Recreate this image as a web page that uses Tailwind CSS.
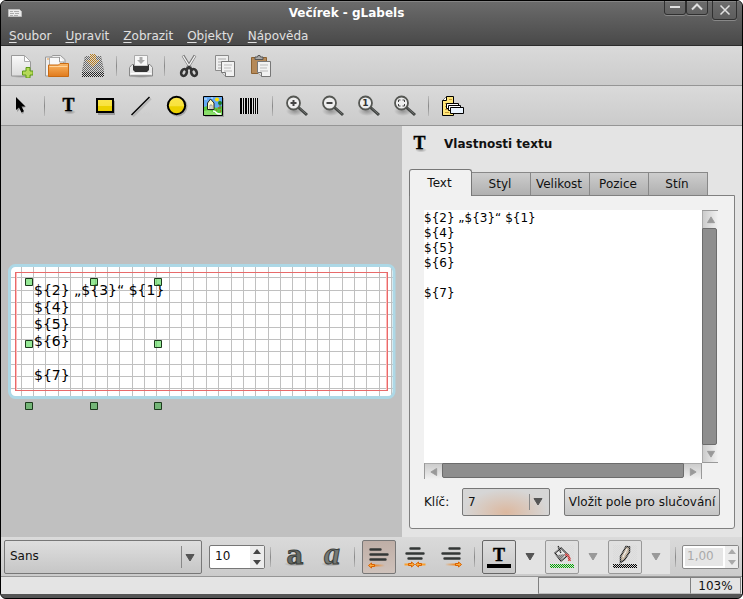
<!DOCTYPE html>
<html lang="cs">
<head>
<meta charset="utf-8">
<title>Večírek - gLabels</title>
<script src="https://cdn.jsdelivr.net/npm/@tailwindcss/browser@4"></script>
</head>
<body class="bg-white font-['DejaVu_Sans',sans-serif] text-[12px] leading-[15px] text-[#111]">
<svg class="absolute size-0" aria-hidden="true">
  <defs>
    <pattern id="dots" width="2" height="2" patternUnits="userSpaceOnUse"><path d="M0 0h1v1H0zM1 1h1v1H1z" fill="#d6d6d6"/></pattern>
    <linearGradient id="paper" x2="0" y2="1"><stop stop-color="#fafafa"/><stop offset="1" stop-color="#dcdcdc"/></linearGradient>
    <linearGradient id="orange" x2="0" y2="1"><stop stop-color="#fbb765"/><stop offset="1" stop-color="#e07a1c"/></linearGradient>
    <linearGradient id="yellow" x2="0" y2="1"><stop stop-color="#fbe64d"/><stop offset=".55" stop-color="#f8e23c"/><stop offset=".56" stop-color="#ecd100"/><stop offset="1" stop-color="#ecd100"/></linearGradient>
    <radialGradient id="shade"><stop stop-color="#000" stop-opacity=".3"/><stop offset="1" stop-color="#000" stop-opacity="0"/></radialGradient>
    <linearGradient id="fadeL"><stop stop-color="#f57900"/><stop offset="1" stop-color="#f57900" stop-opacity="0"/></linearGradient>
    <linearGradient id="fadeR"><stop stop-color="#f57900" stop-opacity="0"/><stop offset="1" stop-color="#f57900"/></linearGradient>
    <symbol id="lens" viewBox="0 0 24 24">
      <ellipse cx="10" cy="17" rx="9" ry="5" fill="url(#shade)"/>
      <path d="M13.500 13.500l8.500 7.500" stroke="#3f4240" stroke-width="3"/>
      <path d="M14.500 14l7 6.300" stroke="#6f716f" stroke-width="1"/>
      <circle cx="8.500" cy="9" r="6.500" fill="#eee" stroke="#555753" stroke-width="1.800"/>
    </symbol>
    <symbol id="down" viewBox="0 0 10 9"><path d="M1 1.500h8L5 8z" fill="currentColor" stroke="currentColor"/></symbol>
  </defs>
</svg>

<div class="flex min-h-screen flex-col overflow-hidden rounded-md border border-black bg-[#555]">
  <header class="h-[45px] border-b border-[#2c2c2c] bg-linear-to-b from-[#6c6c6c] to-[#494949] text-white">
    <div class="flex h-6 items-start border-t border-[#858585] pr-[5px]">
      <svg class="ml-1.5 mt-0.5 h-4 w-4" viewBox="0 0 16 16"><path d="M1.500 5.500h11l2 2v5h-13z" fill="#e9e9e9" stroke="#bbb"/><path d="M3 7.500h3m1 0h5M3 9.500h4m1 0h4M3 11.500h3m1 0h4" stroke="#aaa"/></svg>
      <h1 class="mt-1 flex-1 pl-1.5 text-center font-bold">Večírek - gLabels</h1>
      <button aria-label="Minimalizovat" class="-mt-1 flex h-[17px] w-[22px] items-center justify-center rounded-b-[3px] border border-[#303030] shadow-[0_1px_0_#888]"><svg class="mt-px size-3" viewBox="0 0 12 12"><path d="M1 6h10" stroke="#e0e0e0" stroke-width="2"/></svg></button>
      <button aria-label="Maximalizovat" class="-mt-1 flex h-[17px] w-[22px] items-center justify-center rounded-b-[3px] border border-[#303030] shadow-[0_1px_0_#888]"><svg class="mt-px size-3" viewBox="0 0 12 12"><path d="M1 8.500l5-5 5 5" fill="none" stroke="#e0e0e0" stroke-width="2"/></svg></button>
      <button aria-label="Zavřít" class="-mt-1 ml-1 flex h-[22px] w-[25px] items-center justify-center rounded-b-[3px] border border-[#303030] shadow-[0_1px_0_#888]"><svg class="mt-0.5 size-3" viewBox="0 0 12 12"><path d="M1.500 1.500l9 9m0-9l-9 9" stroke="#e0e0e0" stroke-width="1.500"/></svg></button>
    </div>
    <nav class="flex gap-3.5 pl-2 pt-1 text-[#e0e0e0]">
      <a href="#"><u class="underline-offset-2">S</u>oubor</a>
      <a href="#"><u class="underline-offset-2">U</u>pravit</a>
      <a href="#"><u class="underline-offset-2">Z</u>obrazit</a>
      <a href="#"><u class="underline-offset-2">O</u>bjekty</a>
      <a href="#"><u class="underline-offset-2">N</u>ápověda</a>
    </nav>
  </header>

  <div role="toolbar" aria-label="Soubor" class="flex h-10 items-center border-b border-[#959595] bg-linear-to-b from-[#dadada] to-[#cbcbcb] pl-0.5">
    <button aria-label="Nový" class="flex w-9 justify-center"><svg class="size-6" viewBox="0 0 24 24"><ellipse cx="12" cy="22" rx="11" ry="2" fill="url(#shade)"/><path d="M2.500 1.500h13l6 6v14.500h-19z" fill="url(#paper)" stroke="#999"/><path d="M15.500 1.500v6h6z" fill="#fff" stroke="#aaa"/><path d="M17 13.500h4v3.500h3v4h-3v3h-4v-3h-3.500v-4H17z" fill="#b5d957" stroke="#5d9a16"/></svg></button>
    <button aria-label="Otevřít" class="flex w-9 justify-center"><svg class="size-6" viewBox="0 0 24 24"><path d="M.5 22V3h6l1-1.500h8l4.500 4V22z" fill="#eee" stroke="#999"/><path d="M2 5h3" stroke="#ed9a40"/><path d="M4.500 20V3.500h10l4 4V20z" fill="#f8f8f8" stroke="#aaa"/><path d="M14.500 3v5h5" fill="#fff" stroke="#999"/><path d="M3.500 11h10l1.500-1.500h8.500v13h-20z" fill="url(#orange)" stroke="#c96a12"/><path d="M4.500 12.500h18" stroke="#ffd39a"/></svg></button>
    <button aria-label="Uložit" disabled class="flex w-9 justify-center"><svg class="size-6" viewBox="0 0 24 24"><path d="M4 2h16l3 15v6H1v-6z" fill="#666"/><path d="M1 18h22v5H1z" fill="#222"/><path d="M9 0h6v6h4l-7 7-7-7h4z" fill="#b87a18"/><path d="M4 2h16l3 15v6H1v-6zM8 0h8v2H8z" fill="url(#dots)"/></svg></button>
    <span class="ml-[5px] mr-1.5 h-5 w-px bg-linear-to-b from-[#bbb] via-[#888] to-[#bbb]"></span>
    <button aria-label="Tisk" class="flex w-9 justify-center"><svg class="size-6" viewBox="0 0 24 24"><ellipse cx="12" cy="22" rx="11" ry="2" fill="url(#shade)"/><path d="M3 10.500h18l2.500 3v8.500H.5v-8.500z" fill="#e8e8e8" stroke="#888"/><path d="M4 11h16v5l-2 2H6l-2-2z" fill="#333"/><path d="M5.500 12V1.500h13V12z" fill="#f7f7f7" stroke="#aaa"/><path d="M4 12h16v4H4z" fill="#333"/><path d="M10.500 3h3v3H16l-4 4-4-4h2.500z" fill="#aaa"/><path d="M1.500 19.500h21" stroke="#fff"/><path d="M1.500 21.500h21" stroke="#999"/></svg></button>
    <span class="ml-[5px] mr-1.5 h-5 w-px bg-linear-to-b from-[#bbb] via-[#888] to-[#bbb]"></span>
    <button aria-label="Vyjmout" class="flex w-9 justify-center"><svg class="size-6" viewBox="0 0 24 24"><path d="M6 1.500l8.500 14M18 1.500l-8.500 14" stroke="#777" stroke-width="3"/><path d="M6 2l8 13M18 2l-8 13" stroke="#f3f3f3" stroke-width="1.400"/><g fill="none" stroke="#333" stroke-width="2.600"><ellipse cx="7" cy="18.500" rx="2.700" ry="3.500" transform="rotate(25 7 18.500)"/><ellipse cx="17" cy="18.500" rx="2.700" ry="3.500" transform="rotate(-25 17 18.500)"/><path d="M9 16l3-3 3 3"/></g></svg></button>
    <button aria-label="Kopírovat" class="flex w-9 justify-center"><svg class="size-6" viewBox="0 0 24 24"><path d="M2.500 1.500h13v15h-13z" fill="#eee" stroke="#8a8a8a"/><path d="M5 5h8M5 8h9M5 11h5M5 14h3" stroke="#aaa"/><path d="M8.500 7.500h13v15h-9l-4-4z" fill="#f2f2f2" stroke="#777"/><path d="M11 11h8M11 14h7M11 17h8" stroke="#bbb"/><path d="M8.500 18.500h4v4" fill="#ddd" stroke="#777"/></svg></button>
    <button aria-label="Vložit" class="flex w-9 justify-center"><svg class="size-6" viewBox="0 0 24 24"><path d="M2.500 3.500h15v16h-15z" fill="#b58958" stroke="#8b6233"/><path d="M6 5.500V3h2.500l.5-1.500h2l.5 1.500H14v2.500z" fill="#aaa" stroke="#555"/><path d="M8.500 7.500h13v15h-9l-4-4z" fill="#f2f2f2" stroke="#777"/><path d="M11 11h8M11 14h7M11 17h8" stroke="#bbb"/><path d="M8.500 18.500h4v4" fill="#ddd" stroke="#777"/></svg></button>
  </div>

  <div role="toolbar" aria-label="Kreslení" class="flex h-10 items-center border-b border-[#959595] bg-linear-to-b from-[#dadada] to-[#cbcbcb] pl-0.5">
    <button aria-label="Výběr" class="flex w-9 justify-center"><svg class="size-6" viewBox="0 0 24 24"><path d="M8 6v12l3-3 2 5 2-1-2-5 4-1z" fill="#000" opacity=".25"/><path d="M7 3v13l3-2.500 2.500 5 2.500-1.200-2.500-4.800h4z" fill="#000"/></svg></button>
    <span class="ml-[5px] mr-1.5 h-5 w-px bg-linear-to-b from-[#bbb] via-[#888] to-[#bbb]"></span>
    <button aria-label="Text" class="flex w-9 justify-center"><svg class="size-6 overflow-visible font-['Liberation_Serif',serif] font-bold" viewBox="0 0 24 24"><ellipse cx="13" cy="18" rx="6" ry="2.500" fill="url(#shade)"/><text x="11.500" y="17" text-anchor="middle" font-size="18" stroke="#000" stroke-width=".4">T</text></svg></button>
    <button aria-label="Obdélník" class="flex w-9 justify-center"><svg class="size-6" viewBox="0 0 24 24"><path d="M5 7h17v14H5z" fill="#000" opacity=".25"/><path d="M4 5h16v13H4z" fill="url(#yellow)" stroke="#000" stroke-width="2"/></svg></button>
    <button aria-label="Čára" class="flex w-9 justify-center"><svg class="size-6" viewBox="0 0 24 24"><path d="M4 22.500L22 4.500" stroke="#000" opacity=".12" stroke-width="2"/><path d="M2.500 21L20.500 3" stroke="#000" stroke-width="1.500"/></svg></button>
    <button aria-label="Elipsa" class="flex w-9 justify-center"><svg class="size-6" viewBox="0 0 24 24"><circle cx="12.500" cy="12.500" r="10" fill="#000" opacity=".2"/><circle cx="11.500" cy="11.500" r="8.700" fill="url(#yellow)" stroke="#000" stroke-width="2"/></svg></button>
    <button aria-label="Obrázek" class="flex w-9 justify-center"><svg class="size-6" viewBox="0 0 24 24"><path d="M4 4h19v19H4z" fill="#000" opacity=".2"/><path d="M2.500 2.500h19v19h-19z" fill="#64aaf5" stroke="#000"/><path d="M3 13q5-2 9 0t9-1v9H3z" fill="#58c83c"/><path d="M3 17q5-2 9 1t9 0v3H3z" fill="#8ade6a"/><circle cx="16" cy="5.500" r="2" fill="#ffe000"/><path d="M3 5h3M10 4h2" stroke="#d8efff"/><path d="M6.500 15.500V9L9.500 5 13 9v6.500z" fill="#fffac8" stroke="#222"/><path d="M9 15v-4h2v4" fill="#fff" stroke="#777" stroke-width=".7"/><path d="M19 10v5" stroke="#753"/><circle cx="19" cy="9" r="2" fill="#187a24"/><path d="M12 17q2 0 3 1.500t5 1.500" stroke="#fff" stroke-width="1.500" fill="none"/><path d="M15 16h1m1-2h1m1 3h1" stroke="#e02020"/></svg></button>
    <button aria-label="Čárový kód" class="flex w-9 justify-center"><svg class="size-6" viewBox="0 0 24 24"><path d="M3 4h18v16H3z" fill="#e6e6e6" opacity=".7"/><path d="M3 4h2v16H3zM6 4h1v16H6zM8 4h2v16H8zM11 4h1v16h-1zM13 4h2v16h-2zM16 4h1v16h-1zM18 4h1v16h-1zM20 4h1v16h-1z" fill="#000"/></svg></button>
    <span class="ml-[5px] mr-1.5 h-5 w-px bg-linear-to-b from-[#bbb] via-[#888] to-[#bbb]"></span>
    <button aria-label="Přiblížit" class="flex w-9 justify-center"><svg class="size-6" viewBox="0 0 24 24"><use href="#lens"/><path d="M5.500 9h6m-3-3v6" stroke="#444" stroke-width="2"/></svg></button>
    <button aria-label="Oddálit" class="flex w-9 justify-center"><svg class="size-6" viewBox="0 0 24 24"><use href="#lens"/><path d="M5.500 9h6" stroke="#444" stroke-width="2"/></svg></button>
    <button aria-label="Skutečná velikost" class="flex w-9 justify-center"><svg class="size-6 font-bold" viewBox="0 0 24 24"><use href="#lens"/><text x="8.500" y="12" text-anchor="middle" font-size="9" fill="#333">1</text></svg></button>
    <button aria-label="Přizpůsobit oknu" class="flex w-9 justify-center"><svg class="size-6" viewBox="0 0 24 24"><use href="#lens"/><path d="M5.500 8V6h2m2 0h2v2m0 2v2h-2m-2 0h-2v-2" fill="none" stroke="#444"/></svg></button>
    <span class="ml-[5px] mr-1.5 h-5 w-px bg-linear-to-b from-[#bbb] via-[#888] to-[#bbb]"></span>
    <button aria-label="Slučování" class="flex w-9 justify-center"><svg class="size-6" viewBox="0 0 24 24"><path d="M1.500 6.500l4-4h7v19h-11z" fill="#ffe67a" stroke="#000"/><path d="M1.500 6.500h4v-4" fill="#fff" stroke="#000"/><path d="M4 9.500h2M4 12.500h2M4 15.500h4M4 18.500h4M8 5.500h3" stroke="#c79a35"/><path d="M5.500 9.500h12v5h-12z" fill="#fff" stroke="#000"/><path d="M7.500 11.500h12v5h-12z" fill="#fff" stroke="#000"/><path d="M9.500 13.500h13v6h-13z" fill="#eaf4ff" stroke="#000"/></svg></button>
  </div>

  <main class="flex flex-1">
    <section aria-label="Štítek" class="flex flex-1 items-center justify-center bg-[#c0c0c0]">
      <svg class="h-[134px] w-[388px] overflow-visible" viewBox="8 265 388 134">
        <rect x="9.500" y="266.500" width="385" height="131" rx="6" fill="#fff"/>
        <path stroke="#c0c0c0" fill="none" d="M21.500 267v130M33.500 267v130M45.500 267v130M58.500 267v130M70.500 267v130M82.500 267v130M95.500 267v130M107.500 267v130M119.500 267v130M132.500 267v130M144.500 267v130M156.500 267v130M169.500 267v130M181.500 267v130M193.500 267v130M206.500 267v130M218.500 267v130M231.500 267v130M243.500 267v130M255.500 267v130M268.500 267v130M280.500 267v130M292.500 267v130M305.500 267v130M317.500 267v130M329.500 267v130M342.500 267v130M354.500 267v130M366.500 267v130M379.500 267v130M391.500 267v130M10 277.500h384M10 290.500h384M10 302.500h384M10 314.500h384M10 327.500h384M10 339.500h384M10 351.500h384M10 364.500h384M10 376.500h384M10 388.500h384"/>
        <rect x="9.500" y="265.500" width="384.500" height="132" rx="6" fill="none" stroke="#add8e6" stroke-width="3"/>
        <path d="M16.500 272v119M386.500 272v119" stroke="#fbb"/>
        <rect x="15.500" y="272.500" width="372" height="118" fill="none" stroke="#e86a6a"/>
        <g font-size="14" fill="#000" class="font-['DejaVu_Sans',sans-serif]">
          <text x="34" y="295">${2} „${3}“ ${1}</text><text x="34" y="312">${4}</text><text x="34" y="329">${5}</text><text x="34" y="346">${6}</text><text x="34" y="380">${7}</text>
        </g>
        <g stroke="#1c3a1c" fill="#5cdc5c" fill-opacity=".65">
          <path d="M25.500 278.500h7v7h-7zM90.500 278.500h7v7h-7zM154.500 278.500h7v7h-7zM25.500 340.500h7v7h-7zM154.500 340.500h7v7h-7z"/>
          <path fill="#4cb050" d="M25.500 402.500h7v7h-7zM90.500 402.500h7v7h-7zM154.500 402.500h7v7h-7z"/>
        </g>
      </svg>
    </section>

    <aside class="flex w-[340px] flex-col bg-[#e4e4e4] px-[7px] pb-2">
      <div class="flex h-[43px] items-center pb-[7px]">
        <svg class="h-6 w-[22px] overflow-visible font-['Liberation_Serif',serif] font-bold" viewBox="0 0 22 24"><ellipse cx="12" cy="18" rx="6" ry="2.500" fill="url(#shade)"/><text x="10.500" y="17" text-anchor="middle" font-size="18" stroke="#000" stroke-width=".4">T</text></svg>
        <h2 class="ml-[13px] font-bold">Vlastnosti textu</h2>
      </div>
      <div role="tablist" class="flex items-end">
        <button role="tab" aria-selected="true" class="relative z-10 -mb-px h-[27px] w-[63px] rounded-t-[3px] border border-b-0 border-[#777] bg-[#f1f1f1] pr-0.5">Text</button>
        <button role="tab" class="h-[23px] w-[59px] border-r border-t border-[#888] bg-linear-to-b from-[#cdcdcd] to-[#b0b0b0] pr-0.5">Styl</button>
        <button role="tab" class="h-[23px] w-[59px] border-r border-t border-[#888] bg-linear-to-b from-[#cdcdcd] to-[#b0b0b0] pr-0.5">Velikost</button>
        <button role="tab" class="h-[23px] w-[59px] border-r border-t border-[#888] bg-linear-to-b from-[#cdcdcd] to-[#b0b0b0] pr-0.5">Pozice</button>
        <button role="tab" class="h-[23px] w-[59px] border-r border-t border-[#888] bg-linear-to-b from-[#cdcdcd] to-[#b0b0b0] pr-0.5">Stín</button>
      </div>
      <div role="tabpanel" class="flex flex-1 flex-col rounded-b-[3px] border border-[#808080] bg-[#f1f1f1] px-3.5 pb-3 pt-3.5">
        <div class="mr-0.5 grid flex-1 grid-cols-[1fr_16px] grid-rows-[1fr_16px]">
          <textarea aria-label="Text" class="block resize-none overflow-hidden bg-white pt-px leading-[15px] text-black outline-none">${2} „${3}“ ${1}
${4}
${5}
${6}

${7}</textarea>
          <div class="flex flex-col border-y border-[#999]">
            <button aria-label="Nahoru" class="flex h-[17px] items-center justify-center border-l border-[#aaa] bg-linear-to-r from-[#ccc] to-[#f1f1f1]"><svg class="h-2 w-2.5 rotate-180 text-[#999]"><use href="#down"/></svg></button>
            <div class="mr-px flex-1 rounded-r-[2px] border border-[#6c6c6c] bg-[#8e8e8e]"></div>
            <button aria-label="Dolů" class="flex h-[17px] items-center justify-center border-l border-[#aaa] bg-linear-to-r from-[#ccc] to-[#f1f1f1]"><svg class="h-2 w-2.5 text-[#999]"><use href="#down"/></svg></button>
          </div>
          <div class="flex border-x border-[#999]">
            <button aria-label="Vlevo" class="flex w-[17px] items-center justify-center border-t border-[#aaa] bg-linear-to-b from-[#ccc] to-[#f1f1f1]"><svg class="h-2 w-2.5 rotate-90 text-[#999]"><use href="#down"/></svg></button>
            <div class="mb-px flex-1 rounded-b-[2px] border border-[#6c6c6c] bg-[#8e8e8e]"></div>
            <button aria-label="Vpravo" class="flex w-[17px] items-center justify-center border-t border-[#aaa] bg-linear-to-b from-[#ccc] to-[#f1f1f1]"><svg class="h-2 w-2.5 -rotate-90 text-[#999]"><use href="#down"/></svg></button>
          </div>
        </div>
        <div class="mt-[9px] flex items-center">
          <label for="key" class="w-[38px]">Klíč:</label>
          <div class="relative h-7 w-[88px]">
            <select id="key" class="size-full appearance-none rounded-[2px] border border-[#777] bg-[#d8d8d8] bg-radial-[at_50%_90%] from-[#dcb89f] to-[#d6d6d6] to-70% pl-[5px]"><option>7</option></select>
            <span class="pointer-events-none absolute right-5 top-1.5 h-4 w-px bg-[#888]"></span>
            <svg class="pointer-events-none absolute right-[7px] top-[9px] h-[9px] w-2.5 text-[#555]"><use href="#down"/></svg>
          </div>
          <button class="ml-3.5 h-7 flex-1 whitespace-nowrap rounded-[2px] border border-[#777] bg-linear-to-b from-[#e0e0e0] to-[#c6c6c6]">Vložit pole pro slučování</button>
        </div>
      </div>
    </aside>
  </main>

  <div role="toolbar" aria-label="Formát" class="flex h-10 items-center border-b border-[#959595] bg-linear-to-b from-[#dadada] to-[#cbcbcb] pl-[3px] pr-[3px]">
    <div class="relative h-[34px] w-[198px]">
      <select aria-label="Písmo" class="size-full appearance-none rounded-[2px] border border-[#777] bg-linear-to-b from-[#dedede] to-[#c6c6c6] pl-[5px]"><option>Sans</option></select>
      <span class="pointer-events-none absolute right-5 top-1.5 h-[22px] w-px bg-[#888]"></span>
      <svg class="pointer-events-none absolute right-[7px] top-[13px] h-[9px] w-2.5 text-[#555]"><use href="#down"/></svg>
    </div>
    <div class="ml-[7px] flex h-6 w-14 rounded-[2px] border border-[#777] bg-white">
      <input aria-label="Velikost písma" value="10" class="w-10 min-w-0 pl-[5px] outline-none">
      <div class="flex flex-1 flex-col items-center justify-between bg-[#ececec] py-[3px] text-[#444]">
        <button aria-label="Zvětšit" class="block"><svg class="h-[5px] w-2 rotate-180" viewBox="0 0 8 5"><path d="M0 0h8L4 5z" fill="currentColor"/></svg></button>
        <button aria-label="Zmenšit" class="block"><svg class="h-[5px] w-2" viewBox="0 0 8 5"><path d="M0 0h8L4 5z" fill="currentColor"/></svg></button>
      </div>
    </div>
    <span class="ml-[5px] mr-1.5 h-5 w-px bg-linear-to-b from-[#bbb] via-[#888] to-[#bbb]"></span>
    <button aria-label="Tučné" class="flex w-9 justify-center"><svg class="size-6 overflow-visible font-['DejaVu_Serif',serif] font-bold" viewBox="0 0 24 24"><ellipse cx="12" cy="19" rx="11" ry="2.500" fill="url(#shade)"/><text x="12" y="18.500" text-anchor="middle" font-size="26" fill="#666a65" stroke="#3b3e3b">a</text></svg></button>
    <button aria-label="Kurzíva" class="flex w-9 justify-center"><svg class="size-6 overflow-visible font-['Liberation_Serif',serif] font-bold italic" viewBox="0 0 24 24"><ellipse cx="12" cy="19" rx="10" ry="2.500" fill="url(#shade)"/><text x="13" y="18.500" text-anchor="middle" font-size="32" fill="#777b76" stroke="#3b3e3b">a</text></svg></button>
    <span class="ml-[5px] mr-[7px] h-5 w-px bg-linear-to-b from-[#bbb] via-[#888] to-[#bbb]"></span>
    <button aria-label="Zarovnat vlevo" aria-pressed="true" class="flex h-[34px] w-[34px] items-center justify-center rounded-[2px] border border-[#777] bg-linear-to-b from-[#bfaea6] to-[#cfc2bb]"><svg class="size-6" viewBox="0 0 24 24"><g stroke="#333736" stroke-width="2.400" stroke-linecap="round"><path d="M3.500 4.500h10M3.500 9.500h17M3.500 14.500h15"/></g><path d="M5 19.500h13v2H5z" fill="url(#fadeL)"/><path d="M1.500 20.500l3-2.500v1.500h3v2h-3V23z" fill="#fcaf3e" stroke="#d96000"/></svg></button>
    <button aria-label="Na střed" class="flex w-9 justify-center pl-0.5"><svg class="size-6" viewBox="0 0 24 24"><g stroke="#333736" stroke-width="2.400" stroke-linecap="round"><path d="M7.500 3.500h9M3.500 8.500h17M5.500 13.500h13"/></g><path d="M1.500 18.500h5v2h-5z" fill="#f8a030"/><path d="M17.500 18.500h5v2h-5z" fill="#f8a030"/><path d="M11.500 19.500L8.500 17v1.500h-3v2h3V22zM12.500 19.500l3-2.500v1.500h3v2h-3V22z" fill="#fcaf3e" stroke="#d96000"/></svg></button>
    <button aria-label="Zarovnat vpravo" class="flex w-9 justify-center pl-0.5"><svg class="size-6" viewBox="0 0 24 24"><g stroke="#333736" stroke-width="2.400" stroke-linecap="round"><path d="M10.500 3.500h10M3.500 8.500h17M5.500 13.500h15"/></g><path d="M6 18.500h12v2H6z" fill="url(#fadeR)"/><path d="M22.500 19.500l-3-2.500v1.500h-3v2h3V22z" fill="#fcaf3e" stroke="#d96000"/></svg></button>
    <span class="ml-1.5 mr-[7px] h-5 w-px bg-linear-to-b from-[#bbb] via-[#888] to-[#bbb]"></span>
    <div class="flex items-center bg-[#e3e3e3]">
      <button aria-label="Barva textu" class="flex h-[34px] w-[34px] items-center justify-center rounded-[2px] border border-[#666] bg-linear-to-b from-[#dedede] to-[#c8c8c8]"><svg class="size-6 overflow-visible font-['Liberation_Serif',serif] font-bold" viewBox="0 0 24 24"><text x="12" y="16" text-anchor="middle" font-size="18" stroke="#000" stroke-width=".4">T</text><path d="M0 19h24v4H0z"/></svg></button>
      <button aria-label="Vybrat barvu textu" class="flex w-[29px] justify-center pr-0.5 text-[#555]"><svg class="h-[9px] w-2.5"><use href="#down"/></svg></button>
      <button aria-label="Barva výplně" disabled class="flex h-[34px] w-[34px] items-center justify-center rounded-[2px] border border-[#999] bg-[#e0e0e0]"><svg class="size-6" viewBox="0 0 24 24"><path d="M5 8l6-5 7 7-7 6z" fill="#eee" stroke="#222" stroke-width="1.500"/><path d="M8 1l3 7" stroke="#222" stroke-width="1.500"/><path d="M7 10l9-1-5 6z" fill="#777"/><path d="M15 9.500q4.500 0 4.500 6.500" fill="none" stroke="#c33" stroke-width="2.500"/><path d="M0 0h24v18H0z" fill="url(#dots)" opacity=".5"/><path d="M0 19h24v4H0z" fill="#00a800"/><path d="M0 19h24v4H0z" fill="url(#dots)"/></svg></button>
      <button aria-label="Vybrat barvu výplně" disabled class="flex w-[29px] justify-center pr-0.5 text-[#999]"><svg class="h-[9px] w-2.5"><use href="#down"/></svg></button>
      <button aria-label="Barva čáry" disabled class="flex h-[34px] w-[34px] items-center justify-center rounded-[2px] border border-[#999] bg-[#e0e0e0]"><svg class="size-6" viewBox="0 0 24 24"><path d="M13 1.500l3.500.5v5l-5 8-4 2.500v-6z" fill="#c8b49a" stroke="#222" stroke-width="1.500"/><path d="M14 4l-4 8" stroke="#fff"/><path d="M0 0h24v18H0z" fill="url(#dots)" opacity=".5"/><path d="M0 19h24v4H0z"/><path d="M0 19h24v4H0z" fill="url(#dots)"/></svg></button>
      <button aria-label="Vybrat barvu čáry" disabled class="flex w-7 justify-center text-[#999]"><svg class="h-[9px] w-2.5"><use href="#down"/></svg></button>
    </div>
    <span class="ml-[5px] mr-1.5 h-5 w-px bg-linear-to-b from-[#bbb] via-[#888] to-[#bbb]"></span>
    <div class="flex h-6 flex-1 rounded-[2px] border border-[#888] bg-white text-[#aaa]">
      <input aria-label="Tloušťka čáry" value="1,00" disabled class="m-0.5 w-[38px] min-w-0 bg-[#e6e6e6] pl-0.5">
      <div class="flex flex-1 flex-col items-center justify-between bg-[#ececec] py-[3px]">
        <button aria-label="Silnější" disabled class="block"><svg class="h-[5px] w-2 rotate-180" viewBox="0 0 8 5"><path d="M0 0h8L4 5z" fill="currentColor"/></svg></button>
        <button aria-label="Tenčí" disabled class="block"><svg class="h-[5px] w-2" viewBox="0 0 8 5"><path d="M0 0h8L4 5z" fill="currentColor"/></svg></button>
      </div>
    </div>
  </div>

  <footer class="flex h-[17px] justify-end bg-[#e4e4e4] pr-px leading-[17px]">
    <div class="w-[152px] border border-r-0 border-[#808080] border-b-[#bbb]"></div>
    <output class="w-[51px] border border-[#808080] border-b-[#bbb] text-center">103%</output>
  </footer>
  <div class="h-1 bg-[#555]"></div>
</div>
</body>
</html>
